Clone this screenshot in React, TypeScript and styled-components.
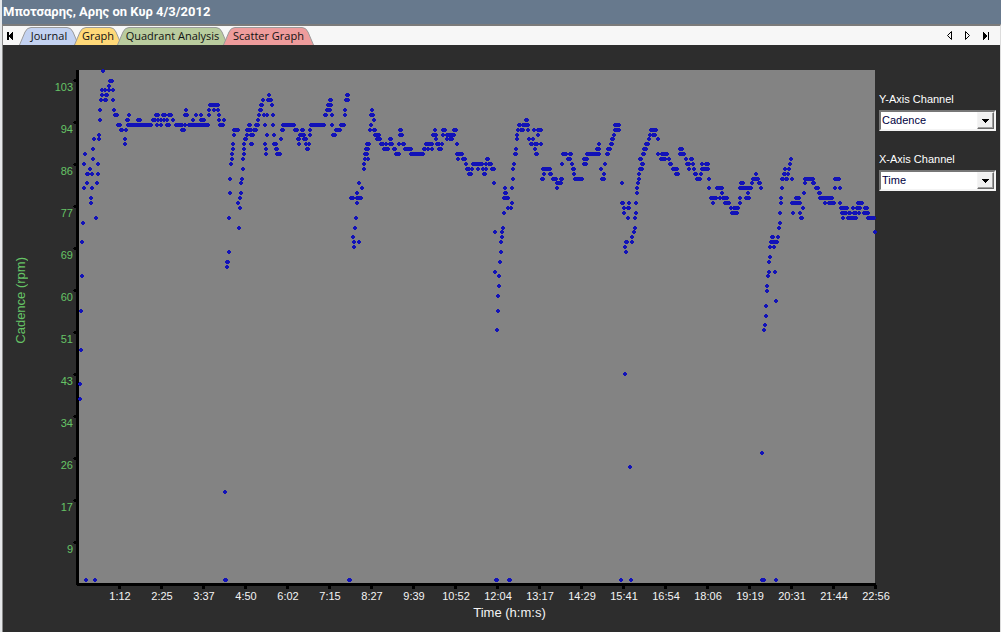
import React, { useState } from "react";
import styled, { createGlobalStyle } from "styled-components";

const GlobalStyle = createGlobalStyle`
  * { box-sizing: border-box; }
  body {
    margin: 0;
    background: #2d2d2d;
    font-family: "Liberation Sans", Arial, sans-serif;
    font-size: 11px;
  }
`;

const Frame = styled.div`
  min-height: 100vh;
  display: flex;
  flex-direction: column;
  border-left: 2px solid #e6e8ea;
`;

const TitleBar = styled.h1`
  margin: 0;
  height: 24px;
  padding: 0 1px;
  background: #67798d;
  color: #fff;
  font: bold 13px/24px Roboto, "Liberation Sans", sans-serif;
  white-space: nowrap;
`;

const Panel = styled.main`
  flex: 1;
  display: flex;
  flex-direction: column;
  background: #2d2d2d;
  border-top: 2px solid #7b7b7b;
  border-left: 1px solid #8a8a8a;
  border-right: 1px solid #dcdcdc;
`;

const TabStrip = styled.nav`
  display: flex;
  align-items: stretch;
  height: 19px;
  background: #f7f7f7;
`;

const NavButton = styled.button`
  width: 18px;
  padding: 0;
  border: 0;
  background: none;
  display: flex;
  align-items: center;
  justify-content: center;
`;

const NavGroup = styled.div`
  display: flex;
  margin-left: auto;
  padding-right: 5px;
`;

const TabList = styled.div`
  display: flex;
  margin-left: -2px;
  padding-top: 1px;
`;

const Tab = styled.button<{ $width: number }>`
  position: relative;
  width: ${(p) => p.$width}px;
  height: 18px;
  padding: 0;
  border: 0;
  background: none;
  color: #111;
  font: 11px/18px "Open Sans", "Noto Sans", sans-serif;
  text-align: center;
  white-space: nowrap;
  & + & { margin-left: -5px; }
`;

const TabShape = styled.svg`
  position: absolute;
  inset: 0;
`;

const TabLabel = styled.span`
  position: relative;
`;

const Workspace = styled.section`
  display: flex;
  align-items: flex-start;
  padding-top: 25px;
`;

const Chart = styled.figure`
  flex: 1;
  min-width: 0;
  margin: 0;
  display: grid;
  grid-template-columns: 36px 34px minmax(0, 1fr);
`;

const YTitle = styled.div`
  display: flex;
  align-items: center;
  justify-content: center;
  padding-bottom: 58px;
  color: #66c466;
  font-size: 13px;
  line-height: 16px;
  & > span {
    writing-mode: vertical-rl;
    transform: rotate(180deg);
  }
`;

const YLabels = styled.div`
  display: grid;
  grid-template-rows: repeat(12, 1fr);
  align-items: center;
  justify-items: end;
  margin-top: -4px;
  padding-bottom: 19px;
  color: #66c466;
  font-size: 11px;
  line-height: 14px;
`;

const Plot = styled.svg`
  display: block;
  width: 100%;
  height: auto;
  overflow: visible;
`;

const XLabels = styled.div`
  grid-column: 3;
  display: grid;
  grid-template-columns: repeat(19, minmax(0, 1fr));
  justify-items: center;
  margin: 0 -19px 0 26px;
  color: #f4f4f4;
  font-size: 11px;
  line-height: 14px;
`;

const XTitle = styled.figcaption`
  grid-column: 1 / -1;
  padding: 2px 0 0 138px;
  text-align: center;
  color: #f4f4f4;
  font-size: 13px;
  line-height: 16px;
`;

const Sidebar = styled.aside`
  width: 122px;
  padding: 22px 4px 0 1px;
  display: flex;
  flex-direction: column;
  gap: 21px;
`;

const Field = styled.label`
  display: flex;
  flex-direction: column;
  gap: 4px;
  color: #fff;
  font-size: 11px;
  line-height: 14px;
  white-space: nowrap;
`;

const SelectBox = styled.span`
  position: relative;
  display: block;
  height: 21px;
  border: 2px solid;
  border-color: #777 #f4f4f4 #f4f4f4 #777;
  background: #fff;
`;

const Select = styled.select`
  appearance: none;
  display: block;
  width: 100%;
  height: 17px;
  padding: 0 18px 0 1px;
  border: 0;
  background: #fff;
  color: #000040;
  font: 11px/17px "Liberation Sans", Arial, sans-serif;
`;

const Arrow = styled.span`
  position: absolute;
  top: 0;
  right: 0;
  width: 17px;
  height: 17px;
  display: flex;
  align-items: center;
  justify-content: center;
  border: 1px solid;
  border-color: #f4f4f4 #696969 #696969 #f4f4f4;
  box-shadow: inset -1px -1px #a0a0a0;
  background: #f0f0f0;
  pointer-events: none;
`;

const TABS = [
  { label: "Journal", width: 60, fill: "#c3d2f1" },
  { label: "Graph", width: 48, fill: "#ffd978" },
  { label: "Quadrant Analysis", width: 111, fill: "#b9cc9e" },
  { label: "Scatter Graph", width: 91, fill: "#ee9c9c" },
];

const CADENCE = [103, 94, 86, 77, 69, 60, 51, 43, 34, 26, 17, 9];
const TIMES = [
  "1:12", "2:25", "3:37", "4:50", "6:02", "7:15", "8:27", "9:39", "10:52", "12:04",
  "13:17", "14:29", "15:41", "16:54", "18:06", "19:19", "20:31", "21:44", "22:56",
];

// Samples grouped by height; "a-b" is a run of neighbouring samples.
const SAMPLES: Record<number, string> = {
  71: "103",
  81: "110-112",
  86: "109",
  90: "102 105 109 113",
  95: "102 106-107 269 347-348",
  100: "101 105-106 113 263 268-271 330-331 346-348",
  105: "210-218 261-262 272 328-331",
  110: "100 114 186 209 214 218 260-261 327-330 345 372",
  115: "115-117 129 156-158 163-165 169-171 185-187 196 201 209 219 259 264 267 273 325-326 332 345 371-373",
  120: "100 127-128 138-140 153-155 158 161 164 167 173 193 201-204 219 224 258 374 526-527",
  125: "118-120 128-151 157 161 167-169 176-182 185 189-208 220-223 249-250 256-258 265 273 283-294 311-324 332 341-344 371 519-520 523-528 615-619",
  130: "121-122 126 182-184 234-238 247-251 254-256 282-283 295-297 302-303 310 336-340 370 374-375 400-401 435 443-445 454-456 518 521-523 528 534 538-541 615-619 651-656",
  135: "99 234 247 251-253 267 274 300-304 310 333-335 375-379 400-402 433-436 443 447-454 517 538 614 650 653-655",
  139: "94 99 125 245-246 281 298-299 304-306 377-380 390-391 436 447 450-452 517 529 533 612-613 649 658",
  144: "125 233 244 251-252 265 274-276 299 306 309 367-369 381-383 386 390-392 399 403-404 426-432 437-439 442 457 531-532 535-537 541 599 611-612 646-648",
  149: "93 233 244 266 276-277 307-308 366-368 384-388 394-395 405-411 424-425 428 432 439-441 516 535 597-599 608-610 644-646 680-682",
  154: "85 232 244 266 277-280 365-367 396-399 411-423 457-462 515-516 536-537 563-566 570-571 587-599 607-608 643-644 658 662-667 680-684",
  159: "93 232 243 365 368 458 463-465 487-488 568-570 584-587 640-641 661-665 669 686 691-692 791",
  164: "84 98 231 364 466 473-482 486 489-491 514 562 572 584-586 605 642-643 670-671 687-689 693 702 706-708 790",
  169: "90 243 364 467-469 472 478 483 486 492-494 513 543-550 573-574 601 640-642 673-677 689 694 702-708 785 789",
  174: "87-88 92 98 469-471 484-485 544 550-551 574 604 639 676-678 695-696 701 756 784-785 788",
  179: "230 242 513 542-543 553-556 561-562 575-582 602-604 639 697-700 709 753-758 782-783 786-787 792 805-813 835-839",
  183: "87 97 241 359 494 557-561 622 638 741-743 752 759-760 805 813-814",
  188: "84 92 362 505 512 557 637 709 717-722 740-751 761 782 816-818 835 840",
  193: "230 241 357 505-506 637 722 748 804 819-820",
  198: "91 240 351-353 357-361 504-508 711-716 720 723-727 740 746-749 781 796-797 799 820-832",
  203: "91 238 357 512 622-623 629 636 713 725-729 740 781 792-800 825 829-834 840 858-862",
  208: "240 508 511 624 628-629 731 734-738 803 841-847 853 857-860 865-867",
  213: "504 624 636 732-737 780 793 800 842-846 849-850 854-856 859 864-868",
  218: "96 229 356 628 635 801-802 843 848-856 868-874",
  223: "83 780",
  228: "239 355 503 635 779",
  232: "495 502 634 875",
  237: "353 502 632 772-773 778",
  242: "82 354 359 501 626-627 632 771-777",
  247: "354 625 770 774",
  252: "229 501 626",
  257: "770",
  262: "227-228 500 769",
  267: "227",
  272: "495 769 775",
  276: "82 499 768",
  286: "499 767",
  291: "767",
  296: "498",
  301: "776",
  306: "766",
  311: "81 498",
  316: "766",
  325: "765",
  330: "497 764",
  350: "81",
  374: "625",
  384: "80",
  399: "80",
  453: "762",
  467: "630",
  492: "225",
  580: "86 95 225-226 349-350 496-497 509-510 621 631 762-764 776",
};

// Every mark is a four pixel dot with its corners cut off.
const dotsPath = Object.entries(SAMPLES)
  .flatMap(([row, runs]) =>
    runs.split(" ").map((run) => {
      const [from, to = from] = run.split("-").map(Number);
      const y = Number(row);
      const w = to - from;
      return `M${from - 2} ${y - 1}h${w + 4}v2h-${w + 4}zM${from - 1} ${y - 2}h${w + 2}v4h-${w + 2}z`;
    })
  )
  .join("");

const ticksPath =
  CADENCE.map((_, i) => `M73 ${80 + i * 42}h1v-1h3v3h-3v-1h-1z`).join("") +
  TIMES.map((_, i) => `M${118 + i * 42} 585h3v4h-3z`).join("");

function TabButton({ label, width, fill }: { label: string; width: number; fill: string }) {
  const w = width;
  return (
    <Tab type="button" $width={w}>
      <TabShape width={w} height={18} aria-hidden="true">
        <path
          d={`M0.5 18L6 5Q8 0.5 12 0.5H${w - 12}Q${w - 8} 0.5 ${w - 6} 5L${w - 0.5} 18`}
          fill={fill}
          stroke="#9a9a9a"
        />
      </TabShape>
      <TabLabel>{label}</TabLabel>
    </Tab>
  );
}

function ChannelSelect({ label, initial }: { label: string; initial: string }) {
  const [value, setValue] = useState(initial);
  return (
    <Field>
      {label}
      <SelectBox>
        <Select value={value} onChange={(e) => setValue(e.target.value)}>
          <option>Cadence</option>
          <option>Time</option>
        </Select>
        <Arrow>
          <svg width="7" height="4" shapeRendering="crispEdges" aria-hidden="true">
            <path d="M0 0h7v1h-1v1h-1v1h-1v1h-1v-1h-1v-1h-1v-1h-1z" fill="#000" />
          </svg>
        </Arrow>
      </SelectBox>
    </Field>
  );
}

export default function App() {
  return (
    <Frame>
      <GlobalStyle />
      <TitleBar>Μποτσαρης, Αρης on Κυρ 4/3/2012</TitleBar>
      <Panel>
        <TabStrip>
          <NavButton type="button" aria-label="First tab">
            <svg width="10" height="8" shapeRendering="crispEdges">
              <path d="M0 0h2v8h-2zM2 3h1v-1h1v-1h1v-1h1v8h-1v-1h-1v-1h-1v-1h-1z" fill="#000" />
            </svg>
          </NavButton>
          <TabList>
            {TABS.map((t) => (
              <TabButton key={t.label} {...t} />
            ))}
          </TabList>
          <NavGroup>
            <NavButton type="button" aria-label="Previous tab">
              <svg width="6" height="9">
                <path d="M4.500 0.500V8.500L0.500 4.500Z" fill="none" stroke="#000" />
              </svg>
            </NavButton>
            <NavButton type="button" aria-label="Next tab">
              <svg width="6" height="9">
                <path d="M0.500 0.500V8.500L4.500 4.500Z" fill="none" stroke="#000" />
              </svg>
            </NavButton>
            <NavButton type="button" aria-label="Last tab">
              <svg width="8" height="8" shapeRendering="crispEdges">
                <path d="M6 0h1v8h-1zM1 0h1v1h1v1h1v1h1v2h-1v1h-1v1h-1v1h-1z" fill="#000" />
              </svg>
            </NavButton>
          </NavGroup>
        </TabStrip>
        <Workspace>
          <Chart>
            <YTitle>
              <span>Cadence (rpm)</span>
            </YTitle>
            <YLabels>
              {CADENCE.map((v) => (
                <span key={v}>{v}</span>
              ))}
            </YLabels>
            <Plot viewBox="73 70 805 519" shapeRendering="crispEdges" role="img" aria-label="Cadence over time">
              <path d="M79 70h796v513h-796z" fill="#838383" />
              <path d={`M76 70h3v513h797v3h-799v-1h-1z${ticksPath}`} fill="#000" />
              <path d={dotsPath} fill="#1212b8" />
            </Plot>
            <XLabels>
              {TIMES.map((t) => (
                <span key={t}>{t}</span>
              ))}
            </XLabels>
            <XTitle>Time (h:m:s)</XTitle>
          </Chart>
          <Sidebar>
            <ChannelSelect label="Y-Axis Channel" initial="Cadence" />
            <ChannelSelect label="X-Axis Channel" initial="Time" />
          </Sidebar>
        </Workspace>
      </Panel>
    </Frame>
  );
}
